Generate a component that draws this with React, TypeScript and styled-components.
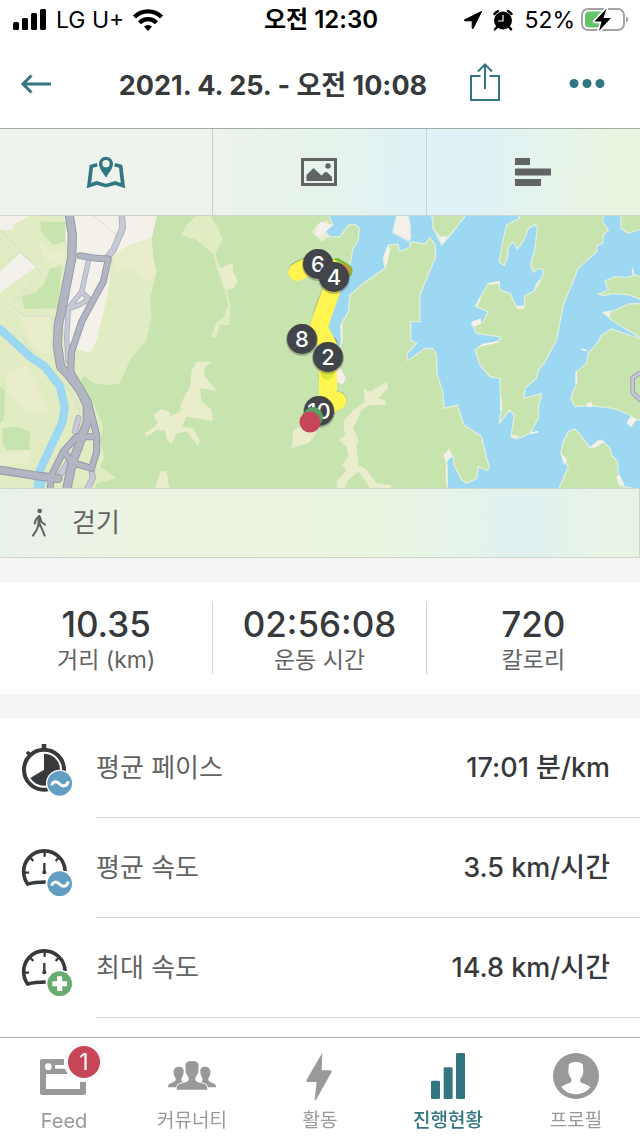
import React from 'react';
import styled, { createGlobalStyle } from 'styled-components';

const teal = '#327682';
const dark = '#37393b';
const grey = '#636363';
const muted = '#999999';

const GlobalStyle = createGlobalStyle`
  *, *::before, *::after { box-sizing: border-box; }
  body {
    margin: 0;
    background: #fff;
    font-family: Inter, "Noto Sans CJK KR", sans-serif;
    color: ${dark};
  }
  button { font: inherit; border: 0; background: none; padding: 0; cursor: pointer; }
  svg { display: block; overflow: visible; flex: none; }
`;

const Screen = styled.div`
  min-height: 100vh;
  display: flex;
  flex-direction: column;
  background: #fff;
`;

const StatusBar = styled.div`
  display: grid;
  grid-template-columns: 1fr auto 1fr;
  align-items: center;
  height: 40px;
  padding: 0 11px 0 13px;
  color: #000;
  font-size: 23px;
  line-height: 40px;
`;

const StatusGroup = styled.div<{ $end?: boolean; $gap: number }>`
  display: flex;
  align-items: center;
  justify-content: ${p => (p.$end ? 'flex-end' : 'flex-start')};
  gap: ${p => p.$gap}px;
`;

const Clock = styled.span`
  font-size: 24px;
  font-weight: 600;
`;

const Header = styled.header`
  display: flex;
  align-items: center;
  height: 88px;
  padding: 0 34px 0 20px;
`;

const IconButton = styled.button<{ $width: number }>`
  display: flex;
  align-items: center;
  width: ${p => p.$width}px;
  height: 48px;
  color: ${teal};
`;

const Title = styled.h1`
  flex: 1;
  margin: 0;
  padding-top: 4px;
  text-align: center;
  white-space: nowrap;
  font-size: 27px;
  line-height: 40px;
  font-weight: 700;
`;

const Actions = styled.div`
  display: flex;
  gap: 68px;
`;

const Tabs = styled.div`
  display: grid;
  grid-template-columns: repeat(3, 1fr);
  height: 88px;
  border-top: 1px solid #a0aca4;
  border-bottom: 1px solid #cdd3cd;
  background: linear-gradient(95deg, #edf3ec 0%, #eff3ef 30%, #e8f3e8 40%, #e5f3ec 52%, #dff2f6 65%, #dff2f6 74%, #e4f3ec 84%, #e9f4e0 94%, #e9f4e0 100%);
`;

const Tab = styled.button<{ $active?: boolean }>`
  display: flex;
  align-items: center;
  justify-content: center;
  color: ${p => (p.$active ? teal : '#616463')};
  &:not(:last-child) { border-right: 1px solid #c8d3ce; }
`;

const MapSvg = styled.svg`
  width: 100%;
  height: 272px;
  overflow: hidden;
`;

const ActivityBar = styled.div`
  display: flex;
  align-items: center;
  gap: 22px;
  height: 70px;
  padding-left: 28px;
  border: solid #cbd6c8;
  border-width: 1px 1px 1px 0;
  background: linear-gradient(92deg, #e8f1ea 0%, #ebf2e6 12%, #ebf4e1 20%, #e9f4e0 60%, #e6f3e8 70%, #e1f2f0 80%, #e1f2ef 85%, #e9f3e5 94%, #e9f3e5 100%);
  color: ${grey};
  font-size: 26px;
  line-height: 40px;
`;

const Stats = styled.section`
  display: grid;
  grid-template-columns: repeat(3, 1fr);
  padding: 20px 0;
  border: solid #f4f4f4;
  border-width: 24px 0;
`;

const Stat = styled.div`
  display: flex;
  flex-direction: column;
  align-items: center;
  height: 72px;
  &:not(:last-child) { border-right: 1px solid #d4d4d4; }
`;

const StatValue = styled.strong`
  font-size: 35px;
  line-height: 44px;
  font-weight: 500;
`;

const StatLabel = styled.span`
  font-size: 23px;
  line-height: 28px;
  color: ${grey};
`;

const MetricList = styled.ul`
  flex: 1;
  list-style: none;
  margin: 0;
  padding: 0 0 0 20px;
`;

const Metric = styled.li`
  display: flex;
  align-items: center;
  gap: 20px;
  height: 100px;
`;

const MetricBody = styled.div`
  flex: 1;
  display: flex;
  align-items: center;
  justify-content: space-between;
  height: 100px;
  padding-right: 30px;
  border-bottom: 1px solid #d6d8d8;
`;

const MetricName = styled.span`
  font-size: 26px;
  line-height: 40px;
  color: ${grey};
`;

const MetricValue = styled.span`
  font-size: 27px;
  line-height: 40px;
  font-weight: 500;
`;

const BottomNav = styled.nav`
  position: sticky;
  bottom: 0;
  display: grid;
  grid-template-columns: repeat(5, 1fr);
  height: 99px;
  border-top: 1px solid #a9abab;
  background: #fff;
`;

const NavItem = styled.a<{ $active?: boolean; $latin?: boolean }>`
  position: relative;
  display: flex;
  flex-direction: column;
  align-items: center;
  padding-top: 14px;
  color: ${p => (p.$active ? teal : muted)};
  font-size: ${p => (p.$latin ? 20 : 19)}px;
  line-height: 38px;
  font-weight: ${p => (p.$active ? 500 : 400)};
  text-decoration: none;
`;

const Badge = styled.span`
  position: absolute;
  top: 4px;
  left: 50%;
  width: 40px;
  height: 40px;
  border: 4px solid #fafafa;
  border-radius: 50%;
  background: #c64556;
  color: #fff;
  font-size: 23px;
  line-height: 32px;
  text-align: center;
`;

const SignalIcon = () => (
  <svg width="34" height="22" viewBox="0 0 34 22">
    <rect x="0" y="13" width="6" height="8" rx="1.5" />
    <rect x="9" y="9" width="6" height="12" rx="1.5" />
    <rect x="18" y="4" width="6" height="17" rx="1.5" />
    <rect x="27" y="0" width="6" height="21" rx="1.5" />
  </svg>
);

const WifiIcon = () => (
  <svg width="30" height="22" viewBox="0 0 30 22">
    <g fill="none" stroke="#000" strokeWidth="4.4">
      <path d="M1.5 8a19 19 0 0 1 27 0" />
      <path d="M6.5 13.7a12 12 0 0 1 17 0" />
    </g>
    <path d="M15 22l-4-4.5a6 6 0 0 1 8 0z" />
  </svg>
);

const LocationIcon = () => (
  <svg width="18" height="18" viewBox="0 0 18 18">
    <path d="M17.6.4L9.2 17.3c-.3.6-1 .5-1-.2V9.8H.9c-.7 0-.8-.7-.2-1z" stroke="#000" strokeWidth="1" strokeLinejoin="round" />
  </svg>
);

const AlarmIcon = () => (
  <svg width="20" height="20" viewBox="0 0 20 20">
    <circle cx="10" cy="10.5" r="9" />
    <path d="M1.5 4A11 11 0 0 1 5 1M18.5 4A11 11 0 0 0 15 1M4 17l-2 2.3M16 17l2 2.3" fill="none" stroke="#000" strokeWidth="2.5" strokeLinecap="round" />
    <path d="M10 5v6H5" fill="none" stroke="#fff" strokeWidth="1.2" />
  </svg>
);

const BatteryIcon = () => (
  <svg width="48" height="24" viewBox="0 0 48 24">
    <rect x="1" y="1" width="42" height="21" rx="6" fill="none" stroke="#a2a2a2" strokeWidth="2" />
    <path d="M8 3.5h12v16H8a4 4 0 0 1-4-4v-8a4 4 0 0 1 4-4z" fill="#65c466" />
    <path d="M45 8.5c3 1 3 5 0 6z" fill="#a2a2a2" />
    <path d="M25.5.5L13.5 13.5h7L18 23l12-13h-7.5z" stroke="#fff" strokeWidth="3.5" paintOrder="stroke" strokeLinejoin="round" />
  </svg>
);

const BackIcon = () => (
  <svg width="32" height="20" viewBox="0 0 32 20" fill="none" stroke="currentColor" strokeWidth="3">
    <path d="M31 10H3M11.5 1.5L3 10l8.500 8.500" />
  </svg>
);

const ShareIcon = () => (
  <svg width="30" height="42" viewBox="0 0 30 42" fill="none" stroke="currentColor" strokeWidth="2">
    <path d="M10.5 13H1v24h28V13h-9.5M15 26V2M8 8.5L15 1.5l7 7" />
  </svg>
);

const MoreIcon = () => (
  <svg width="38" height="10" viewBox="0 0 38 10" fill="currentColor">
    <circle cx="6" cy="4.5" r="4.5" />
    <circle cx="19" cy="4.5" r="4.5" />
    <circle cx="32" cy="4.5" r="4.5" />
  </svg>
);

const MapTabIcon = () => (
  <svg width="38" height="32" viewBox="264 90 114 96" fill="currentColor">
    <path fillRule="evenodd" d="M321 155c-9-16-21-27-21-42a21 21 0 0 1 42 0c0 15-12 26-21 42zm0-53a11 11 0 1 0 0 22a11 11 0 0 0 0-22z" />
    <path d="M295 116l-18 5-7 58 23-8 28 8 28-8 23 8-7-58-18-5" fill="none" stroke="currentColor" strokeWidth="11" />
  </svg>
);

const PhotoTabIcon = () => (
  <svg width="36" height="28" viewBox="0 0 36 28" fill="currentColor">
    <rect x="1.5" y="1.5" width="33" height="25" fill="none" stroke="currentColor" strokeWidth="3" />
    <circle cx="27" cy="8" r="2.7" />
    <path d="M5.5 23v-6l7-7 8 7.5 3-3 2.5-.5 5 5V23z" />
  </svg>
);

const BarsTabIcon = () => (
  <svg width="36" height="28" viewBox="0 0 36 28" fill="currentColor">
    <path d="M0 0h15v7H0zM0 10.5h36v7H0zM0 21h26v7H0z" />
  </svg>
);

const WalkIcon = () => (
  <svg width="22" height="30" viewBox="94 506 48 90" fill="none" stroke="currentColor" strokeWidth="6" strokeLinecap="round" strokeLinejoin="round">
    <circle cx="120" cy="515" r="7" fill="currentColor" stroke="none" />
    <path d="M119 530l-10 10-4 13M121 534l4 13 11 9M116 558l-5 14-11 17M121 556l8 18 6 15" />
    <path d="M118 532v25" strokeWidth="9" />
  </svg>
);

const WaveBadge = ({ y }: { y: number }) => (
  <g>
    <circle cx="179" cy={y} r="41" fill="#fff" />
    <circle cx="179" cy={y} r="37" fill="#629ec2" />
    <path d={`M155 ${y + 6}c4-14 16-13 24-4s22 8 26-8`} fill="none" stroke="#fff" strokeWidth="9" />
  </g>
);

const StopwatchIcon = () => (
  <svg width="56" height="56" viewBox="60 60 168 168">
    <circle cx="132" cy="149" r="60" fill="none" stroke={dark} strokeWidth="12" />
    <path d="M125 72h14v14h-14zM77 99l8-7 8 8-7 8z" fill={dark} />
    <path d="M132 149V101a48 48 0 1 1-41 73z" fill={dark} />
    <WaveBadge y={190} />
  </svg>
);

const GaugeIcon = ({ max }: { max?: boolean }) => (
  <svg width="56" height="56" viewBox="60 360 168 168">
    <g fill="none" stroke={dark}>
      <path d="M195 453a62 62 0 0 0-124 3c0 16 5 26 12 36 18-5 35-6 54-6" strokeWidth="11" />
      <path d="M134 397v13M92 414l8 9M175 414l-8 9M75 458h12M180 458h12" strokeWidth="7" />
      <path d="M133 429v29" strokeWidth="7" />
    </g>
    <circle cx="133" cy="457" r="6" fill={dark} />
    {max ? (
      <g>
        <circle cx="179" cy="491" r="41" fill="#fff" />
        <circle cx="179" cy="491" r="37" fill="#68ac70" />
        <path d="M179 469v44M157 491h44" stroke="#fff" strokeWidth="15" />
      </g>
    ) : (
      <WaveBadge y={491} />
    )}
  </svg>
);

const FeedIcon = () => (
  <svg width="80" height="50" viewBox="72 48 240 150" fill="currentColor">
    <path fillRule="evenodd" d="M126 69h126q6 0 6 6v96q0 6-6 6H126q-6 0-6-6V75q0-6 6-6zm12 45v45h102v-45zm27-27v11h93V87zm-20-5a10 10 0 1 0 0 20a10 10 0 0 0 0-20z" />
    <circle cx="252" cy="78" r="60" fill="#fff" />
    <path d="M240 137h18v34h-18z" />
  </svg>
);

const PeopleIcon = () => (
  <svg width="80" height="50" viewBox="456 48 240 150" fill="currentColor">
    <path id="friend" d="M504 154c0-8 3-12 12-14 9-3 13-6 11-13-5-7-7-13-6-22 1-17 32-17 30 0 0 9-2 15-6 21-2 8 1 11 7 14-13 3-21 6-23 14z" />
    <use href="#friend" transform="matrix(-1 0 0 1 1152 0)" />
    <path d="M530 161c0-14 4-17 22-21 14-3 16-8 13-18-5-6-9-11-8-20l-1-14c0-17 40-17 40 0l-1 14c1 9-3 14-8 20-3 10-1 15 13 18 18 4 22 7 22 21z" stroke="#fff" strokeWidth="5" paintOrder="stroke" />
  </svg>
);

const BoltIcon = () => (
  <svg width="80" height="50" viewBox="-120 48 240 150" fill="currentColor">
    <path d="M7 50L-41 133q-1 5 4 5h27l-6 53q1 3 4 0L35 108q1-5-4-5H5z" />
  </svg>
);

const ProgressIcon = () => (
  <svg width="80" height="50" viewBox="264 48 240 150" fill="currentColor">
    <rect x="333" y="134" width="27" height="55" rx="4" />
    <rect x="371" y="94" width="27" height="95" rx="4" />
    <rect x="408" y="51" width="27" height="138" rx="4" />
  </svg>
);

const ProfileIcon = () => (
  <svg width="80" height="50" viewBox="648 48 240 150" fill="currentColor">
    <circle cx="768" cy="120" r="69" />
    <path d="M724 154c6-8 16-9 25-13 7-3 6-9 4-15-5-5-7-11-8-18l1-20c2-13 42-13 43 0l1 20c-1 7-3 13-8 18-2 6-3 12 4 15 9 4 19 5 25 13a56 56 0 0 1-87 0z" fill="#fff" />
  </svg>
);

const land = { fill: '#c7e3ae', stroke: '#e0eddd', strokeWidth: 4, strokeLinejoin: 'round' as const };

const pins = [
  { n: '6', x: 318, y: 264 },
  { n: '4', x: 334, y: 277 },
  { n: '8', x: 302, y: 339 },
  { n: '2', x: 328, y: 357 },
  { n: '10', x: 319, y: 411 },
];

const mainRoads = [
  { d: 'M240 392l50 8 35 2-15 68-65 120-30 90-3 60 53 90 25 100v50l-15 50-50-15', w: 15 },
  { d: 'M290 935h-60l-40 45-35 70-5 45M190 980l35 40', w: 15 },
  { d: 'M0 1035l100 16 75 10', w: 20 },
  { d: 'M207 265l10 65-2 70-25 130-15 70-3 60 10 65 28 30 30 40 22 45v50l-47 130-15 75', w: 22 },
];

const lightRoads = [
  { d: 'M365 265l3 45-28 65-20 25', w: 15 },
  { d: 'M265 410l-20 90-40 50-5 90 5 70M245 500l22 22-25 16-37 14', w: 11 },
  { d: 'M235 880l-10 40M275 1035l3 25-18 35M205 1010l-25 40', w: 14 },
];

const RouteMap = () => (
  <MapSvg viewBox="0 216 640 272" preserveAspectRatio="xMidYMid slice" role="img" aria-label="Route map">
    <rect x="0" y="216" width="640" height="272" fill="#c7e3ae" />

    <g transform="translate(0 125) scale(.33333)">
      <path fill="#e1ecc2" d="M0 270H471l-16 70 5 60 10 40L450 520 455 570 440 640 440 645 390 705 360 775 335 780 280 775 250 750 240 775 280 835 310 905 300 950 315 995 300 1025 350 1060 290 1075 285 1090H0z" />
      <path fill="#e9edcb" d="M340 375l60-15 55-20 5 60 8 40-18 30-60-40-40 10zM20 740l60-20 40 80 20 60-60 0-60-60zM0 985l90-10-5 35-85 15zM60 575l90 0 0 120-60-40zM110 340l40 40 45-10-5 50-50-10z" />
      <path fill="#f4f1ea" d="M190 270H471L455 338 380 363 335 398 325 500 290 645 270 685 210 665 190 600 210 450zM0 270h90l-50 30 0 14-40 0zM0 440l60-55 50 40-50 35-60 45z" />
      <path fill="#c7e3ae" d="M120 290h78l-4 60-34 10-35-35zM150 430l35-6-10 126-100 2-12-37 47-15 20-20zM0 785l15 10-3 90-12 10zM10 910l40-6 40 16-2 55H18l-12-30z" />
      <path fill="none" stroke="#cdd0d4" strokeWidth="2" d="M0 313l125 132-92 94 40 35 65-2 25 10M0 430l58-53M0 570l80 80M280 272l70 57M70 650l100 100 55 70 15 40-5 60" />
      <path fill="none" stroke="#9cd8f1" strokeWidth="25" d="M-5 608l50 45 45 42 45 30 45 60 14 60-6 45-40 85-30 65-5 60" />
      <path fill="none" stroke="#9cd8f1" strokeWidth="34" d="M125 1040l-10 60" />
      <g fill="none" strokeLinejoin="round" strokeLinecap="round">
        {lightRoads.map(r => <path key={r.d} d={r.d} stroke="#aaaebb" strokeWidth={r.w + 5} />)}
        {lightRoads.map(r => <path key={r.d + 'f'} d={r.d} stroke="#c7cad6" strokeWidth={r.w} />)}
        {mainRoads.map(r => <path key={r.d} d={r.d} stroke="#969ba8" strokeWidth={r.w + 6} />)}
        {mainRoads.map(r => <path key={r.d + 'f'} d={r.d} stroke="#b2b6c2" strokeWidth={r.w} />)}
      </g>
      <path fill="#e1ecc2" d="M575 285L560 300 542 330 590 345 640 387 652 435 675 500 685 540 670 580 650 590 633 635 648 640 660 600 688 600 692 540 680 495 700 490 713 465 700 445 698 415 662 430 645 385 668 345 655 310 630 272 590 272z" />
      <path fill="#e9edcb" d="M662 430L698 415 700 445 713 465 700 490 678 495zM590 710L635 710 612 730 615 755 650 797 600 790 605 830 635 855 638 888 560 875 545 905 580 910 600 945 595 963 580 945 560 920 530 925 515 957 500 945 495 915 470 915 440 935 435 925 475 895 460 870 485 853 510 860 510 873 540 860 545 830 570 785 575 735zM466 1090L480 1040 500 1037 508 1090zM875 970L880 915 930 895 950 925 925 955zM935 320L950 300 980 285 1000 325 965 350z" />
    </g>

    <g transform="translate(320 125) scale(.33333)">
      <path
        fill="#9cd8f1"
        stroke="#e0eddd"
        strokeWidth="4"
        strokeLinejoin="round"
        d="M20 260L38 298 15 320 30 335 60 335 85 300 105 298 118 310 115 345 98 375 92 410 75 450 40 500 20 560 -5 618 5 640 30 650 60 670 65 650 62 600 85 560 90 510 130 475 195 430 190 400 205 360 235 358 237 380 270 368 270 350 315 357 330 338 345 360 347 395 300 510 300 550 300 590 272 590 272 645 290 655 262 685 262 708 315 670 340 672 350 690 350 745 368 800 372 850 412 840 432 900 485 935 500 1000 508 1025 500 1038 475 1025 470 1060 440 1075 425 1065 402 1020 400 995 380 1000 382 1095H990V260z"
      />
      <path fill="#f4f1ea" stroke="#e0eddd" strokeWidth="4" d="M232 265L218 322 265 347 272 340 270 295 262 265zM335 265L340 310 365 360 385 338 442 265z" />
      <path {...land} d="M337 265L340 310 360 335 385 335 442 265z" />
      <path
        {...land}
        d="M600 265L598 280 560 300 548 350 538 410 552 422 562 400 565 365 580 350 592 372 612 345 625 310 645 298 652 310 645 370 632 420 640 442 655 430 672 435 668 450 655 480 640 500 615 512 612 550 590 548 570 505 540 495 537 470 505 475 485 510 468 545 505 560 490 590 455 595 470 625 515 632 543 635 535 650 490 657 465 675 480 720 510 755 540 760 543 860 538 895 568 855 583 870 573 935 590 942 630 925 655 880 657 840 665 807 640 812 612 820 615 790 650 760 655 735 672 715 710 645 730 540 775 430 830 380 830 362 848 355 850 330 865 315 848 290 850 265z"
      />
      <path {...land} d="M902 265L903 310 925 325 975 308V265zM835 507L865 495 855 468 885 455 920 458 945 450 975 460 975 530 930 510 880 505 850 512zM848 562L880 558 925 537 975 535 975 645 930 620 875 585z" />
      <path {...land} d="M975 880L950 885 930 870 895 855 865 848 810 842 765 845 752 820 768 780 770 740 800 715 805 685 835 650 845 630 875 612 930 632 960 640 975 625z" />
      <path {...land} d="M715 1095L745 1025 722 985 730 950 745 920 765 912 785 935 810 968 845 945 870 970 875 990 893 1010 895 1055 910 1085 970 1095z" />
      <path fill="#f4f1ea" d="M455 590L483 580 482 598 460 606zM850 562L872 557 870 577zM190 400L203 362 212 368 198 430zM575 930L597 934 583 942zM370 990L388 972 397 992 378 1012zM800 835L815 832 818 845 803 847zM812 965L835 945 855 950 822 970zM888 1055L900 1050 915 1085 897 1080zM920 893L932 873 950 885 932 907zM0 290L40 300 20 315 5 335 -15 330zM45 730L57 722 78 760 68 778 50 770zM722 985L742 1005 732 1020zM590 542L612 542 612 551 590 551z" />
      <path fill="none" stroke="#f4f1ea" strokeWidth="5" d="M660 465L645 487M540 472L508 477M768 740L770 775M535 650L480 663M937 430L940 450M65 600L65 655M380 1020V1080M543 820V855M655 920L630 925M480 520L468 545M783 672L800 677" />
      <path fill="#e9edcb" d="M200 770L150 800 130 790 135 830 95 860 70 890 75 930 55 945 80 965 85 995 65 1020 80 1035 50 1070 50 1095 75 1095 80 1070 115 1040 150 1090 210 1095 215 1080 170 1075 140 1035 115 1020 110 965 115 945 100 910 125 855 150 840 200 840 195 825 175 820 205 790z" />
      <path fill="none" stroke="#9da3ae" strokeWidth="14" d="M970 738L938 758V803L970 833" />
      <path fill="none" stroke="#c7cad6" strokeWidth="8" d="M970 738L938 758V803L970 833" />
    </g>

    <g transform="translate(270 216) scale(.33333)" fill="none" strokeLinecap="round" strokeLinejoin="round">
      <path stroke="#6e7d4b" strokeOpacity=".5" strokeWidth="52" d="M82 163l35-16M182 225l-22 55-14 55M178 385l-6 95 3 45M204 552l-34 26" />
      <path stroke="#79b93c" strokeWidth="46" d="M200 150l25 15" />
      <path stroke="#f08a2e" strokeWidth="36" d="M198 155l25 10" />
      <path stroke="#fff450" strokeWidth="54" d="M82 168l40-20M184 225l-22 60-16 50 32 62-4 75 0 60M202 554l-34 20M180 155l20 10" />
      <path stroke="#e0e83c" strokeWidth="40" d="M172 462v10" />
    </g>

    {pins.map(p => (
      <g key={p.n}>
        <circle cx={p.x} cy={p.y + 1} r="16" fill="#37393b" fillOpacity=".3" />
        <circle cx={p.x} cy={p.y} r="15" fill="#414549" />
        <text x={p.x} y={p.y + 8} textAnchor="middle" fontSize="22" fontWeight="500" fill="#fff">{p.n}</text>
      </g>
    ))}
    <circle cx="313" cy="417" r="10" fill="#5a9f68" />
    <circle cx="310" cy="422" r="10.5" fill="#c64556" />
  </MapSvg>
);

const metrics = [
  { name: '평균 페이스', value: '17:01 분/km', icon: <StopwatchIcon /> },
  { name: '평균 속도', value: '3.5 km/시간', icon: <GaugeIcon /> },
  { name: '최대 속도', value: '14.8 km/시간', icon: <GaugeIcon max /> },
];

const stats = [
  { value: '10.35', label: '거리 (km)' },
  { value: '02:56:08', label: '운동 시간' },
  { value: '720', label: '칼로리' },
];

const navItems = [
  { label: 'Feed', icon: <FeedIcon />, badge: '1', latin: true },
  { label: '커뮤너티', icon: <PeopleIcon /> },
  { label: '활동', icon: <BoltIcon /> },
  { label: '진행현황', icon: <ProgressIcon />, active: true },
  { label: '프로필', icon: <ProfileIcon /> },
];

export default function App() {
  return (
    <Screen>
      <GlobalStyle />
      <StatusBar>
        <StatusGroup $gap={9}>
          <SignalIcon />
          <span>LG U+</span>
          <WifiIcon />
        </StatusGroup>
        <Clock>오전 12:30</Clock>
        <StatusGroup $end $gap={6}>
          <StatusGroup $gap={11}>
            <LocationIcon />
            <AlarmIcon />
            <span>52%</span>
          </StatusGroup>
          <BatteryIcon />
        </StatusGroup>
      </StatusBar>

      <Header>
        <IconButton $width={56} aria-label="Back"><BackIcon /></IconButton>
        <Title>2021. 4. 25. - 오전 10:08</Title>
        <Actions>
          <IconButton $width={30} aria-label="Share"><ShareIcon /></IconButton>
          <IconButton $width={38} aria-label="More"><MoreIcon /></IconButton>
        </Actions>
      </Header>

      <main>
        <Tabs>
          <Tab $active aria-label="Map"><MapTabIcon /></Tab>
          <Tab aria-label="Photos"><PhotoTabIcon /></Tab>
          <Tab aria-label="Splits"><BarsTabIcon /></Tab>
        </Tabs>
        <RouteMap />
        <ActivityBar>
          <WalkIcon />
          <span>걷기</span>
        </ActivityBar>
        <Stats>
          {stats.map(s => (
            <Stat key={s.label}>
              <StatValue>{s.value}</StatValue>
              <StatLabel>{s.label}</StatLabel>
            </Stat>
          ))}
        </Stats>
      </main>

      <MetricList>
        {metrics.map(m => (
          <Metric key={m.name}>
            {m.icon}
            <MetricBody>
              <MetricName>{m.name}</MetricName>
              <MetricValue>{m.value}</MetricValue>
            </MetricBody>
          </Metric>
        ))}
      </MetricList>

      <BottomNav>
        {navItems.map(n => (
          <NavItem key={n.label} href="#" $active={n.active} $latin={n.latin}>
            {n.icon}
            {n.label}
            {n.badge && <Badge>{n.badge}</Badge>}
          </NavItem>
        ))}
      </BottomNav>
    </Screen>
  );
}
